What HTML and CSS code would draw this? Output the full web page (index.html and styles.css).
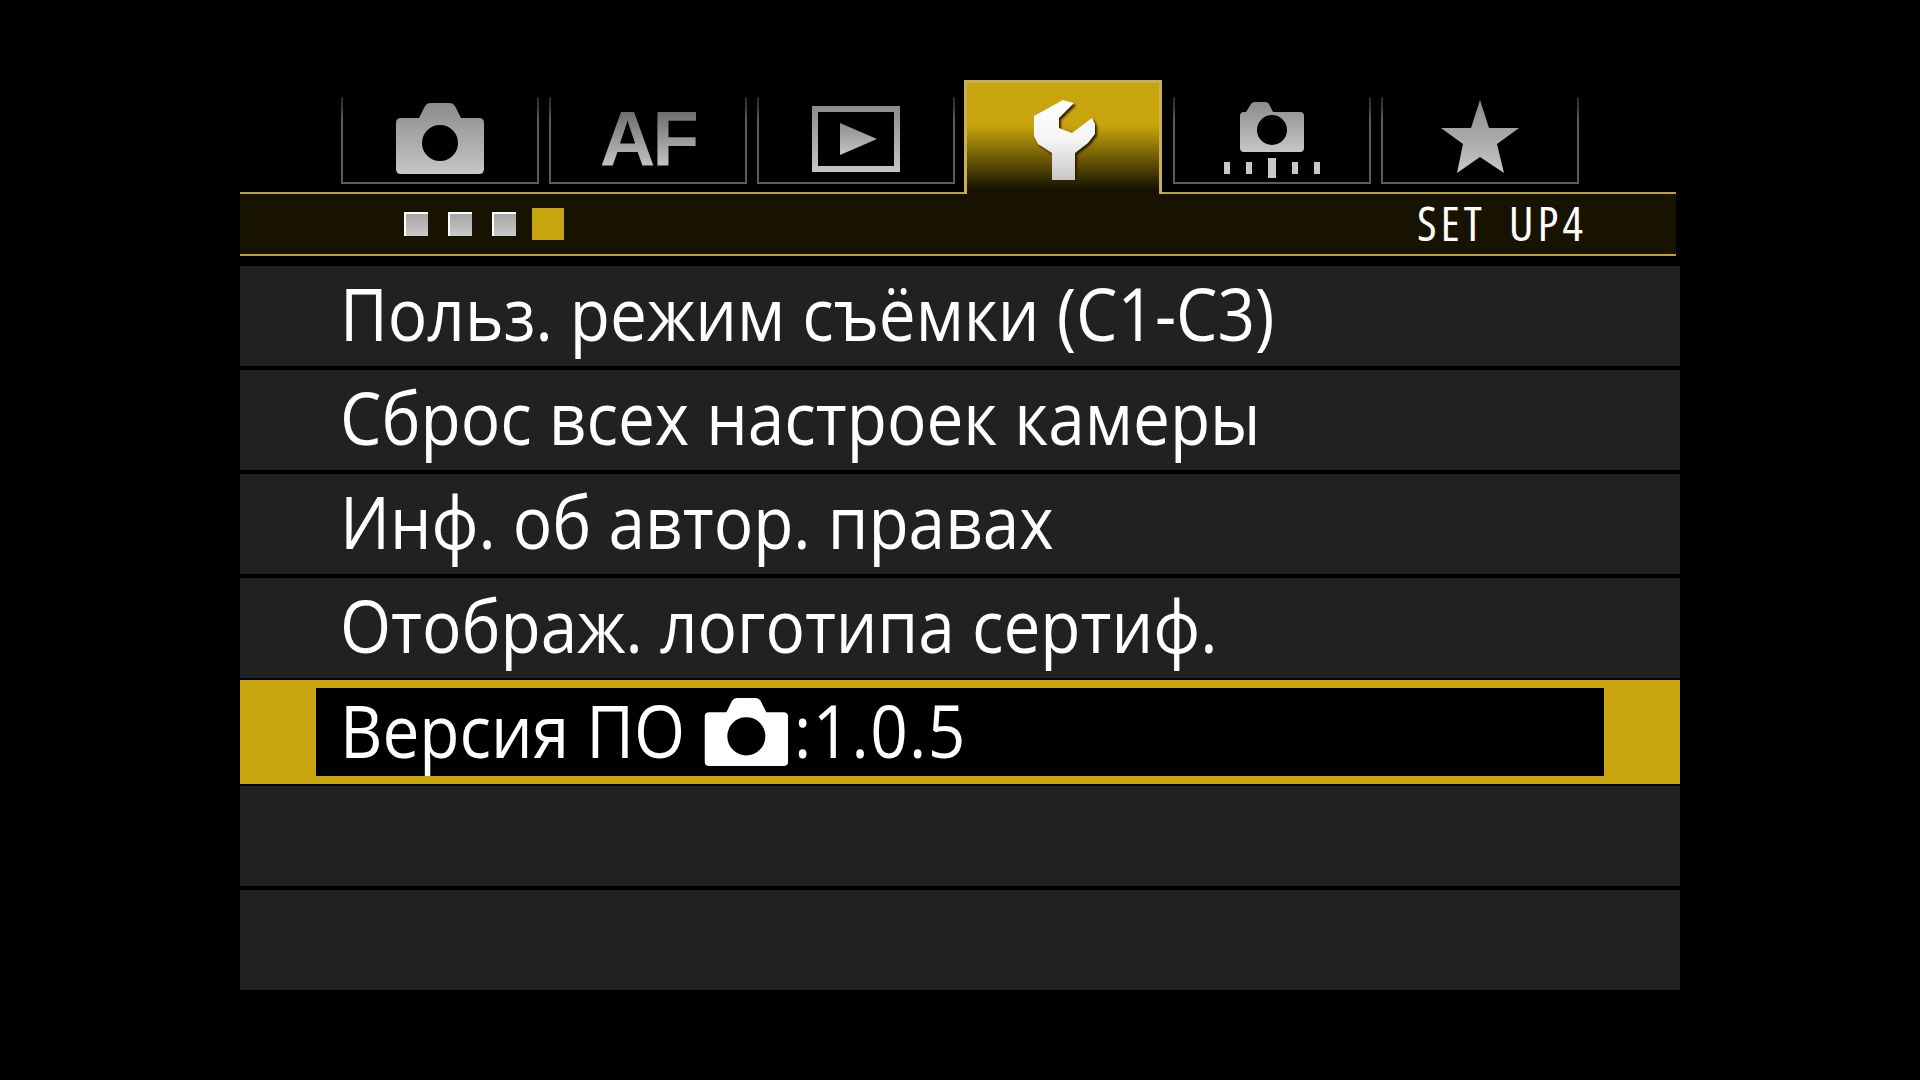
FILE: index.html
```html
<!DOCTYPE html>
<html lang="ru">
<head>
    <meta charset="UTF-8">
    <title>Версия ПО</title>
    <link rel="stylesheet" href="styles.css">
</head>
<body>
    <svg class="defs" width="0" height="0">
        <defs>
            <linearGradient id="grey" x1="0" y1="0" x2="0" y2="1">
                <stop offset="0" stop-color="#8c8c8c"/>
                <stop offset="1" stop-color="#c6c6c6"/>
            </linearGradient>
            <linearGradient id="bright" x1="0" y1="0" x2="0" y2="1">
                <stop offset="0" stop-color="#ffffff"/>
                <stop offset="0.5" stop-color="#f4f4f4"/>
                <stop offset="1" stop-color="#c8c8c8"/>
            </linearGradient>
        </defs>
    </svg>

    <main class="screen">
        <nav class="tabs">
            <div class="tab">
                <svg class="icon icon-camera" width="88" height="71" viewBox="0 0 88 71">
                    <path fill="url(#grey)" fill-rule="evenodd" d="M5 15H23L29 3Q31 0 34 0H54Q57 0 59 3L65 15H83Q88 15 88 20V66Q88 71 83 71H5Q0 71 0 66V20Q0 15 5 15ZM44 22A18 18 0 1 0 44 58A18 18 0 1 0 44 22Z"/>
                </svg>
            </div>
            <div class="tab">
                <span class="af">AF</span>
            </div>
            <div class="tab">
                <svg class="icon icon-play" width="88" height="66" viewBox="0 0 88 66">
                    <path fill="url(#grey)" fill-rule="evenodd" d="M0 0H88V66H0ZM6 6V60H82V6Z"/>
                    <path fill="url(#grey)" d="M28 17L65 33L28 49Z"/>
                </svg>
            </div>
            <div class="tab tab-active">
                <svg class="icon icon-wrench" width="61" height="80" viewBox="0 0 61 80">
                    <path fill="url(#bright)" d="M0 16L29 0L40 3L25 18V28L38 33L58 18L61 24V34L54 43L41 53V80H18V53L4 44L0 36Z"/>
                </svg>
            </div>
            <div class="tab">
                <svg class="icon icon-bracket" width="96" height="76" viewBox="0 0 96 76">
                    <path fill="url(#grey)" fill-rule="evenodd" d="M20 10H22L27 2Q28 0 31 0H41Q44 0 45 2L49 10H76Q80 10 80 14V46Q80 50 76 50H20Q16 50 16 46V14Q16 10 20 10ZM48 13A15 15 0 1 0 48 43A15 15 0 1 0 48 13Z"/>
                    <path fill="#c8c8c8" d="M0 60H6V72H0ZM22 60H28V72H22ZM44 56H52V76H44ZM68 60H74V72H68ZM90 60H96V72H90Z"/>
                </svg>
            </div>
            <div class="tab">
                <svg class="icon icon-star" width="78" height="73" viewBox="0 0 78 73">
                    <path fill="url(#grey)" d="M39 0L48 28H78L56 44L63 73L39 57L16 73L22 44L0 28H30Z"/>
                </svg>
            </div>
        </nav>

        <header class="band">
            <span class="page"></span>
            <span class="page"></span>
            <span class="page"></span>
            <span class="page page-current"></span>
            <span class="band-title">SET UP4</span>
        </header>

        <ul class="menu">
            <li class="row"><span class="row-text">Польз. режим съёмки (С1-С3)</span></li>
            <li class="row"><span class="row-text">Сброс всех настроек камеры</span></li>
            <li class="row"><span class="row-text">Инф. об автор. правах</span></li>
            <li class="row"><span class="row-text">Отображ. логотипа сертиф.</span></li>
            <li class="row row-selected">
                <div class="row-inner">
                    <span class="row-text">Версия ПО
                        <svg class="inline-camera" width="93" height="68" viewBox="0 0 88 71" preserveAspectRatio="none">
                            <path fill="#fff" fill-rule="evenodd" d="M5 15H23L29 3Q31 0 34 0H54Q57 0 59 3L65 15H83Q88 15 88 20V66Q88 71 83 71H5Q0 71 0 66V20Q0 15 5 15ZM44 20A20 20 0 1 0 44 60A20 20 0 1 0 44 20Z"/>
                        </svg><span class="version">:1.0.5</span></span>
                </div>
            </li>
            <li class="row"></li>
            <li class="row"></li>
        </ul>
    </main>
</body>
</html>
```

FILE: styles.css
```css
* {
    box-sizing: border-box;
}

body {
    margin: 0;
    height: 1080px;
    overflow: hidden;
    background-color: #000;
    font-family: "Open Sans", "Noto Sans", sans-serif;
    color: #fff;
}

.defs {
    display: block;
    height: 0;
}

.screen {
    padding: 80px 240px 0;
}

/* Top tabs */
.tabs {
    display: flex;
    align-items: flex-end;
    gap: 10px;
    height: 112px;
    padding-left: 101px;
}

.tab {
    display: flex;
    justify-content: center;
    align-items: flex-end;
    width: 198px;
    height: 87px;
    margin-bottom: 8px;
    border-style: solid;
    border-width: 0 2px 2px;
    border-image: linear-gradient(to bottom, #222 0, #5c5c5c 30%, #5c5c5c 100%) 2;
}

.tab-active {
    position: relative; /* sits over the band's top line */
    z-index: 1;
    height: 114px;
    margin: 0 1px -2px -1px;
    border-width: 3px 3px 0;
    border-style: solid;
    border-color: #c9b052;
    border-image: none;
    background: linear-gradient(to bottom, #c8a50c 0, #c8a50c 38%, #171300 96%);
}

.icon-camera {
    margin-bottom: 8px;
}

.icon-play {
    margin-bottom: 10px;
}

.icon-wrench {
    margin: 0 0 14px 3px;
    filter: drop-shadow(2px 2px 1px #2a2000);
}

.icon-bracket {
    margin-bottom: 4px;
}

.icon-star {
    margin-bottom: 9px;
}

.af {
    margin-bottom: 4px;
    font-family: "Liberation Sans", sans-serif;
    font-size: 77px;
    font-weight: 700;
    line-height: 1;
    letter-spacing: -3px;
    background: linear-gradient(to bottom, #6e6e6e 15%, #c4c4c4 85%);
    -webkit-background-clip: text;
    background-clip: text;
    color: transparent;
}

/* Band under the tabs */
.band {
    display: flex;
    align-items: center;
    gap: 20px;
    height: 64px;
    margin-right: 4px;
    padding: 0 89px 0 164px;
    background-color: #171300;
    border-top: 2px solid #bfa338;
    border-bottom: 2px solid #bfa338;
}

.page {
    width: 24px;
    height: 24px;
    border-top: 2px solid #fff;
    border-left: 2px solid #fff;
    background: linear-gradient(to bottom, #a4a4a4, #cacaca);
}

.page-current {
    width: 32px;
    height: 32px;
    margin-left: -4px;
    border: 0;
    background: #c8a50c;
}

.band-title {
    margin: -3px 0 0 auto;
    font-size: 48px;
    font-stretch: 75%;
    letter-spacing: 4px;
    word-spacing: 10px;
    line-height: 1;
}

/* Menu rows */
.menu {
    display: flex;
    flex-direction: column;
    gap: 4px;
    margin: 10px 0 0;
    padding: 0;
    list-style: none;
}

.row {
    height: 100px;
    padding-left: 100px;
    background-color: #212121;
    font-size: 73px;
    line-height: 94px;
    white-space: nowrap;
}

/* the camera's font is narrower than Open Sans */
.row-text {
    display: inline-block;
    transform: scaleX(0.9);
    transform-origin: left center;
}

.row-selected {
    height: 104px;
    margin: -2px 0;
    padding: 8px 76px;
    background-color: #c8a50c;
}

.row-inner {
    height: 88px;
    padding-left: 24px;
    background-color: #000;
    line-height: 84px;
}

.inline-camera {
    margin: 0 6px -8px 3px;
}

.version {
    letter-spacing: 1.5px;
}
```
